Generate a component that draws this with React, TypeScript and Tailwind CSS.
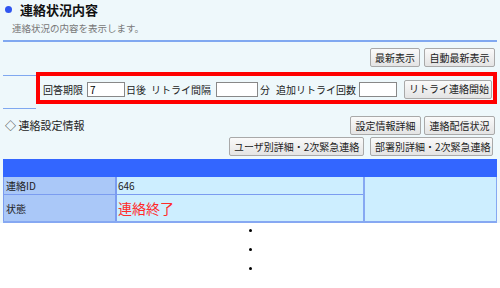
import React from "react";

const font = { fontFamily: '"Noto Sans CJK JP", "Noto Sans", sans-serif' };

function Btn({ children, className = "" }: { children: React.ReactNode; className?: string }) {
  return (
    <button
      className={`h-[19px] px-[4px] text-[10px] leading-none text-[#222] bg-gradient-to-b from-[#fafafa] to-[#e4e4e4] border border-[#a9a9a9] rounded-[2px] whitespace-nowrap ${className}`}
    >
      {children}
    </button>
  );
}

function Field({ value = "", width }: { value?: string; width: string }) {
  return (
    <input
      defaultValue={value}
      className={`${width} h-[15px] bg-white border border-[#888] px-[2px] text-[10px] leading-none text-black outline-none`}
    />
  );
}

export default function App() {
  return (
    <div className="w-[500px] h-[288px] bg-white overflow-hidden" style={font}>
      <div className="bg-[#eef8fb] px-[3px]">
        {/* title */}
        <div className="pt-[1px] flex items-center h-[18px] pl-[2px]">
          <span className="w-[7px] h-[7px] rounded-full bg-[#2f55f0] mr-[8px]" />
          <span className="text-[13px] font-bold text-[#111] leading-none">連絡状況内容</span>
        </div>
        <div className="mt-[4px] pl-[9px] pb-[6px] border-b-2 border-[#80a8f0] text-[9.5px] leading-[12px] text-[#777]">
          連絡状況の内容を表示します。
        </div>

        {/* refresh buttons */}
        <div className="mt-[6px] flex justify-end gap-[4px] pr-[2px]">
          <Btn className="w-[50px]">最新表示</Btn>
          <Btn className="w-[71px]">自動最新表示</Btn>
        </div>

        {/* retry row */}
        <div className="mt-[5px] flex">
          <div className="w-[33px] mt-[3px] h-[34px] border-y border-[#80a8f0]" />
          <div className="w-[462px] h-[32px] border-4 border-[#ff0000] flex items-center pl-[3px] pt-[2px] text-[10px] text-[#222] whitespace-nowrap">
            <span>回答期限</span>
            <span className="ml-[4px]">
              <Field value="7" width="w-[38px]" />
            </span>
            <span className="ml-[1px]">日後</span>
            <span className="ml-[5px]">リトライ間隔</span>
            <span className="ml-[5px]">
              <Field width="w-[42px]" />
            </span>
            <span className="ml-[2px]">分</span>
            <span className="ml-[6px]">追加リトライ回数</span>
            <span className="ml-[3px]">
              <Field width="w-[38px]" />
            </span>
            <Btn className="ml-[7px] w-[88px]">リトライ連絡開始</Btn>
          </div>
        </div>

        {/* settings info */}
        <div className="mt-[7px] flex items-center justify-between pr-[2px]">
          <span className="pl-[2px] text-[11px] text-[#222] leading-none">◇ 連絡設定情報</span>
          <div className="flex gap-[3px]">
            <Btn className="w-[71px]">設定情報詳細</Btn>
            <Btn className="w-[71px]">連絡配信状況</Btn>
          </div>
        </div>
        <div className="mt-[2px] flex justify-end gap-[6px] pr-[4px]">
          <Btn className="w-[135px]">ユーザ別詳細・2次緊急連絡</Btn>
          <Btn className="w-[123px]">部署別詳細・2次緊急連絡</Btn>
        </div>

        {/* table */}
        <div className="mt-[3px]">
          <div className="h-[18px] bg-[#3366ff]" />
          <div className="grid grid-cols-[114px_246px_134px] grid-rows-[18px_26px] border-b-2 border-[#86a8f2] text-[#222]">
            <div className="bg-[#aac8f8] border-l border-r-2 border-b border-[#7b9cf0] flex items-center pl-[2px] text-[10px]">
              連絡ID
            </div>
            <div className="bg-[#cdeeff] border-b border-[#7b9cf0] flex items-center pl-[1px] text-[10px]">
              646
            </div>
            <div className="row-span-2 bg-[#cdeeff] border-l-2 border-r border-[#86a8f2]" />
            <div className="bg-[#aac8f8] border-l border-r-2 border-[#7b9cf0] flex items-center pl-[2px] text-[10px]">
              状態
            </div>
            <div className="bg-[#cdeeff] flex items-center pl-[1px] text-[14px] text-[#ff2a2a]">
              連絡終了
            </div>
          </div>
        </div>
      </div>

      {/* continuation dots */}
      <div className="flex flex-col items-center gap-[16px] pt-[6px]">
        <span className="w-[3px] h-[3px] rounded-full bg-black" />
        <span className="w-[3px] h-[3px] rounded-full bg-black" />
        <span className="w-[3px] h-[3px] rounded-full bg-black" />
      </div>
    </div>
  );
}
